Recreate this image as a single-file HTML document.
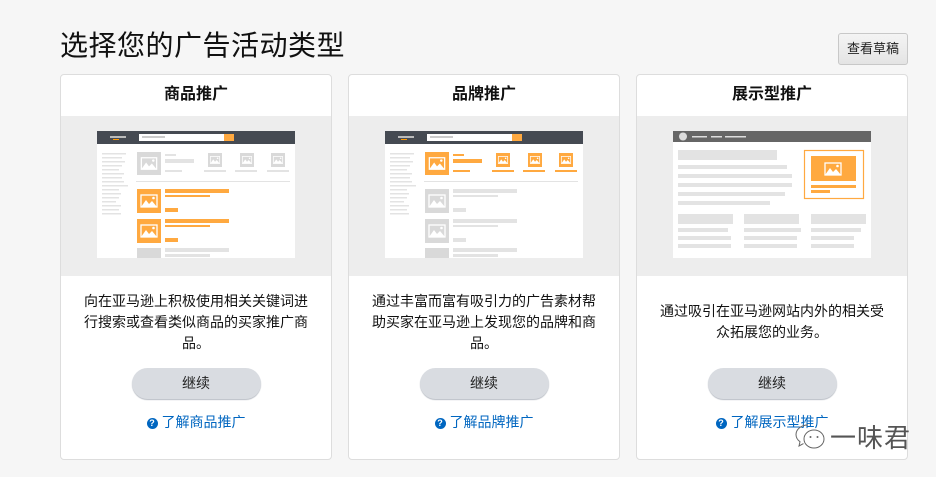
<!DOCTYPE html>
<html><head><meta charset="utf-8"><style>
*{margin:0;padding:0;box-sizing:border-box}
body{width:936px;height:477px;background:#f6f6f6;font-family:"Liberation Sans","Noto Sans CJK SC",sans-serif;position:relative;overflow:hidden;color:#111}
h1{position:absolute;left:60px;top:24px;font-size:28px;font-weight:400;letter-spacing:0.5px;color:#111}
.draft{position:absolute;left:838px;top:33px;width:70px;height:32px;border:1px solid #c8c8c8;border-radius:3px;background:linear-gradient(#f4f4f4,#e4e4e4);font-size:13px;text-align:center;line-height:30px;color:#222}
.card{position:absolute;top:74px;width:272px;height:386px;background:#fff;border:1px solid #ddd;border-radius:4px;overflow:hidden}
.hd{height:41px;text-align:center;font-size:16px;font-weight:700;line-height:40px}
.img{height:160px;background:#ededed;position:relative}
.img svg{position:absolute;left:36px;top:15px}
.desc{height:92px;display:flex;align-items:center;justify-content:center;text-align:center;font-size:14px;line-height:21px;padding:0 20px;color:#111}
.btn{margin:0 auto;width:129px;height:31px;border-radius:16px;background:#d9dce1;box-shadow:0 1px 1px #b8bcc4;text-align:center;line-height:31px;font-size:14px;color:#222}
.lnk{text-align:center;margin-top:13px;font-size:14px;color:#0066c0}
.q{display:inline-block;width:11px;height:11px;border-radius:50%;background:#0066c0;color:#fff;font-size:9px;line-height:11px;font-weight:700;text-align:center;vertical-align:1px;margin-right:4px}
.wm{position:absolute;left:830px;top:418px;font-size:26px;color:#555;letter-spacing:1px}
</style></head><body>
<svg width="0" height="0" style="position:absolute"><defs>
<symbol id="pic" viewBox="0 0 24 24"><rect x="4" y="6" width="16" height="12" fill="none" stroke="#fff" stroke-width="1.3"/><path d="M4 18 L9 11 L12 15 L15 12 L20 18Z" fill="#fff"/><circle cx="16.5" cy="9" r="1.3" fill="#fff"/></symbol>
</defs></svg>
<h1>选择您的广告活动类型</h1>
<div class="draft">查看草稿</div>

<div class="card" style="left:60px">
<div class="hd">商品推广</div>
<div class="img"><svg width="198" height="127" viewBox="0 0 198 127">
<rect width="198" height="127" fill="#fff"/>
<rect width="198" height="13" fill="#454a52"/>
<rect x="13" y="5" width="16" height="2" fill="#bbb"/><rect x="16" y="8" width="6" height="1" fill="#f90"/>
<rect x="42" y="3" width="95" height="7" fill="#fff"/><rect x="45" y="5" width="23" height="2" fill="#ccc"/><rect x="127" y="3" width="10" height="7" fill="#ffa940"/>
<g fill="#e3e3e3"><rect x="5" y="22" width="24" height="1.5"/><rect x="5" y="26" width="20" height="1.5"/><rect x="5" y="30" width="23" height="1.5"/><rect x="5" y="34" width="20" height="1.5"/><rect x="5" y="38" width="17" height="1.5"/><rect x="5" y="42" width="22" height="1.5"/><rect x="5" y="46" width="20" height="1.5"/><rect x="5" y="50" width="22" height="1.5"/><rect x="5" y="54" width="26" height="1.5"/><rect x="5" y="58" width="17" height="1.5"/><rect x="5" y="62" width="19" height="1.5"/><rect x="5" y="66" width="17" height="1.5"/><rect x="5" y="70" width="14" height="1.5"/><rect x="5" y="74" width="19" height="1.5"/><rect x="5" y="78" width="17" height="1.5"/><rect x="5" y="82" width="19" height="1.5"/>
<rect x="68" y="23" width="11" height="2"/><rect x="68" y="28" width="29" height="4"/><rect x="68" y="39" width="17" height="2"/>
<rect x="107" y="39" width="22" height="2"/><rect x="138" y="39" width="22" height="2"/><rect x="170" y="39" width="22" height="2"/>
<rect x="39" y="50" width="154" height="1"/>
<rect x="68" y="117" width="64" height="4"/><rect x="68" y="123" width="45" height="3"/></g>
<g fill="#d9d9d9"><rect x="40" y="21" width="24" height="23"/><rect x="111" y="22" width="14" height="14"/><rect x="143" y="22" width="14" height="14"/><rect x="174" y="22" width="14" height="14"/><rect x="40" y="117" width="24" height="10"/></g>
<use href="#pic" x="40" y="21" width="24" height="23"/><use href="#pic" x="111" y="22" width="14" height="14"/><use href="#pic" x="143" y="22" width="14" height="14"/><use href="#pic" x="174" y="22" width="14" height="14"/>
<g fill="#ffa940"><rect x="40" y="58" width="24" height="24"/><rect x="68" y="58" width="64" height="4"/><rect x="68" y="64" width="45" height="2"/><rect x="68" y="77" width="13" height="4"/>
<rect x="40" y="88" width="24" height="24"/><rect x="68" y="88" width="64" height="4"/><rect x="68" y="94" width="45" height="2"/><rect x="68" y="107" width="13" height="4"/></g>
<use href="#pic" x="40" y="58" width="24" height="24"/><use href="#pic" x="40" y="88" width="24" height="24"/>
</svg></div>
<div class="desc">向在亚马逊上积极使用相关关键词进行搜索或查看类似商品的买家推广商品。</div>
<div class="btn">继续</div>
<div class="lnk"><span class="q">?</span>了解商品推广</div>
</div>

<div class="card" style="left:348px">
<div class="hd">品牌推广</div>
<div class="img"><svg width="198" height="127" viewBox="0 0 198 127">
<rect width="198" height="127" fill="#fff"/>
<rect width="198" height="13" fill="#454a52"/>
<rect x="13" y="5" width="16" height="2" fill="#bbb"/><rect x="16" y="8" width="6" height="1" fill="#f90"/>
<rect x="42" y="3" width="95" height="7" fill="#fff"/><rect x="45" y="5" width="23" height="2" fill="#ccc"/><rect x="127" y="3" width="10" height="7" fill="#ffa940"/>
<g fill="#e3e3e3"><rect x="5" y="22" width="24" height="1.5"/><rect x="5" y="26" width="20" height="1.5"/><rect x="5" y="30" width="23" height="1.5"/><rect x="5" y="34" width="20" height="1.5"/><rect x="5" y="38" width="17" height="1.5"/><rect x="5" y="42" width="22" height="1.5"/><rect x="5" y="46" width="20" height="1.5"/><rect x="5" y="50" width="22" height="1.5"/><rect x="5" y="54" width="26" height="1.5"/><rect x="5" y="58" width="17" height="1.5"/><rect x="5" y="62" width="19" height="1.5"/><rect x="5" y="66" width="17" height="1.5"/><rect x="5" y="70" width="14" height="1.5"/><rect x="5" y="74" width="19" height="1.5"/><rect x="5" y="78" width="17" height="1.5"/><rect x="5" y="82" width="19" height="1.5"/>
<rect x="39" y="50" width="154" height="1"/>
<rect x="68" y="58" width="64" height="4"/><rect x="68" y="64" width="45" height="2"/><rect x="68" y="77" width="13" height="4"/>
<rect x="68" y="88" width="64" height="4"/><rect x="68" y="94" width="45" height="2"/><rect x="68" y="107" width="13" height="4"/>
<rect x="68" y="117" width="64" height="4"/><rect x="68" y="123" width="45" height="3"/></g>
<g fill="#ffa940"><rect x="40" y="21" width="24" height="23"/><rect x="111" y="22" width="14" height="14"/><rect x="143" y="22" width="14" height="14"/><rect x="174" y="22" width="14" height="14"/>
<rect x="68" y="23" width="11" height="2"/><rect x="68" y="28" width="29" height="4"/><rect x="68" y="39" width="17" height="2"/>
<rect x="107" y="39" width="22" height="2"/><rect x="138" y="39" width="22" height="2"/><rect x="170" y="39" width="22" height="2"/></g>
<g fill="#d9d9d9"><rect x="40" y="58" width="24" height="24"/><rect x="40" y="88" width="24" height="24"/><rect x="40" y="117" width="24" height="10"/></g>
<use href="#pic" x="40" y="21" width="24" height="23"/><use href="#pic" x="111" y="22" width="14" height="14"/><use href="#pic" x="143" y="22" width="14" height="14"/><use href="#pic" x="174" y="22" width="14" height="14"/>
<use href="#pic" x="40" y="58" width="24" height="24"/><use href="#pic" x="40" y="88" width="24" height="24"/>
</svg></div>
<div class="desc">通过丰富而富有吸引力的广告素材帮助买家在亚马逊上发现您的品牌和商品。</div>
<div class="btn">继续</div>
<div class="lnk"><span class="q">?</span>了解品牌推广</div>
</div>

<div class="card" style="left:636px">
<div class="hd">展示型推广</div>
<div class="img"><svg width="198" height="127" viewBox="0 0 198 127">
<rect width="198" height="127" fill="#fff"/>
<rect width="198" height="11" fill="#666"/>
<circle cx="10" cy="5.5" r="4" fill="#ddd"/>
<g fill="#ddd"><rect x="19" y="5" width="15" height="1.5"/><rect x="38" y="5" width="11" height="1.5"/><rect x="52" y="5" width="21" height="1.5"/></g>
<g fill="#e3e3e3"><rect x="5" y="19" width="99" height="10"/><rect x="5" y="34" width="109" height="4"/><rect x="5" y="43" width="114" height="4"/><rect x="5" y="52" width="114" height="4"/><rect x="5" y="61" width="107" height="4"/><rect x="5" y="70" width="92" height="4"/>
<rect x="5" y="83" width="55" height="10"/><rect x="71" y="83" width="55" height="10"/><rect x="138" y="83" width="55" height="10"/>
<rect x="5" y="97" width="50" height="4"/><rect x="5" y="105" width="53" height="4"/><rect x="5" y="113" width="53" height="4"/>
<rect x="71" y="97" width="57" height="4"/><rect x="71" y="105" width="53" height="4"/><rect x="71" y="113" width="53" height="4"/>
<rect x="138" y="97" width="50" height="4"/><rect x="138" y="105" width="43" height="4"/><rect x="138" y="113" width="43" height="4"/></g>
<rect x="131.5" y="19.5" width="59" height="48" fill="none" stroke="#ffa940" stroke-width="1.2"/>
<g fill="#ffa940"><rect x="138" y="25" width="45" height="25"/><rect x="138" y="54" width="45" height="3"/><rect x="138" y="59" width="19" height="3"/></g>
<use href="#pic" x="148" y="26" width="24" height="24"/>
</svg></div>
<div class="desc">通过吸引在亚马逊网站内外的相关受众拓展您的业务。</div>
<div class="btn">继续</div>
<div class="lnk"><span class="q">?</span>了解展示型推广</div>
</div>

<svg style="position:absolute;left:794px;top:422px" width="36" height="32" viewBox="0 0 36 32"><path d="M14 3C7 3 2 7.5 2 12.5c0 3 1.6 5.5 4 7.2L5 24l4.5-2.4" fill="none" stroke="#666" stroke-width="1"/><ellipse cx="20" cy="17" rx="10" ry="9" fill="rgba(255,255,255,.7)" stroke="#666" stroke-width="1"/><circle cx="16.5" cy="15" r="1" fill="#666"/><circle cx="23.5" cy="15" r="1" fill="#666"/></svg>
<div class="wm">一味君</div>
</body></html>
